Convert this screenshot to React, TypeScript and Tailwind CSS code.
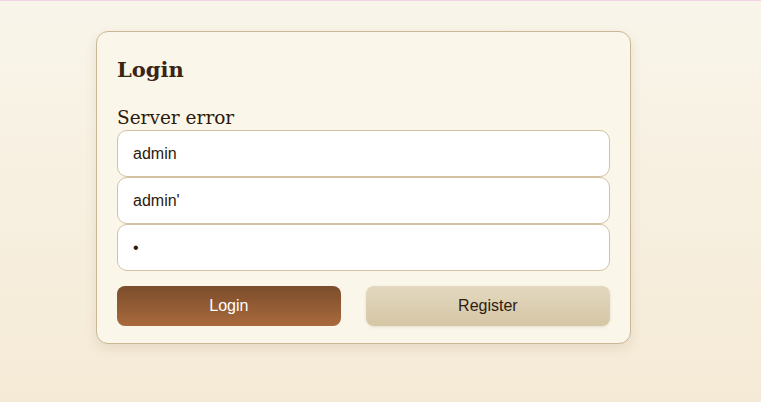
import React, { useState } from "react";

const serif = { fontFamily: '"DejaVu Serif", Georgia, serif' };

export default function App() {
    const [username, setUsername] = useState("admin");
    const [email, setEmail] = useState("admin'");
    const [password, setPassword] = useState("a");

    return (
        <div className="min-h-[402px] w-full border-t border-[#f3d4e6] bg-gradient-to-b from-[#f9f5ea] to-[#f5ead6] font-['Liberation_Sans',Arial,sans-serif]">
            <div className="pt-[30px] pl-[96px]">
                <form
                    className="w-[535px] rounded-xl border border-[#cab796] bg-[#faf6ea] px-5 pt-5 pb-[17px] shadow-[0_4px_12px_rgba(120,90,40,0.12)]"
                    onSubmit={(e) => e.preventDefault()}
                >
                    <h2 className="mt-[2px] text-[21px] font-bold leading-8 text-[#3a2414]" style={serif}>
                        Login
                    </h2>
                    <p className="mt-5 text-[18.5px] leading-6 text-[#2c1a0c]" style={serif}>
                        Server error
                    </p>
                    <div className="flex flex-col">
                        <input
                            className="h-[47px] w-full rounded-[10px] border border-[#d3c2a2] bg-white pl-[15px] pr-4 text-base text-[#2a1a0c] outline-none"
                            value={username}
                            onChange={(e) => setUsername(e.target.value)}
                        />
                        <input
                            className="h-[47px] w-full rounded-[10px] border border-[#d3c2a2] bg-white pl-[15px] pr-4 text-base text-[#2a1a0c] outline-none"
                            value={email}
                            onChange={(e) => setEmail(e.target.value)}
                        />
                        <input
                            type="password"
                            className="h-[47px] w-full rounded-[10px] border border-[#d3c2a2] bg-white pl-[15px] pr-4 text-base text-[#2a1a0c] outline-none"
                            value={password}
                            onChange={(e) => setPassword(e.target.value)}
                        />
                    </div>
                    <div className="mt-[15px] flex gap-[25px]">
                        <button
                            type="submit"
                            className="h-10 flex-auto rounded-lg bg-gradient-to-b from-[#7b4d2c] to-[#a96a3c] px-[80px] text-base text-white"
                        >
                            Login
                        </button>
                        <button
                            type="button"
                            className="h-10 flex-auto rounded-lg bg-gradient-to-b from-[#e3d8c0] to-[#d5c6a5] px-[80px] text-base text-[#2e2010] shadow-[0_1px_3px_rgba(120,90,40,0.15)]"
                        >
                            Register
                        </button>
                    </div>
                </form>
            </div>
        </div>
    );
}
